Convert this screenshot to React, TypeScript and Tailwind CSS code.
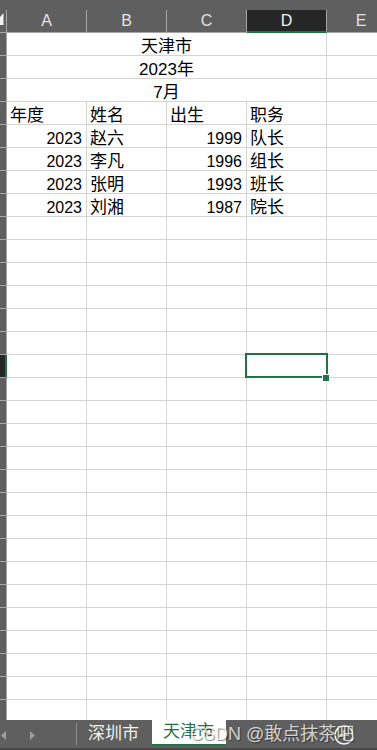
import React from 'react';

type Row = {
  year?: string;
  name?: string;
  born?: string;
  job?: string;
  merged?: string;
};

const rows: Row[] = [
  { merged: '天津市' },
  { merged: '2023年' },
  { merged: '7月' },
  { year: '年度', name: '姓名', born: '出生', job: '职务' },
  { year: '2023', name: '赵六', born: '1999', job: '队长' },
  { year: '2023', name: '李凡', born: '1996', job: '组长' },
  { year: '2023', name: '张明', born: '1993', job: '班长' },
  { year: '2023', name: '刘湘', born: '1987', job: '院长' }
];

const TOTAL_ROWS = 30;
const SELECTED_ROW = 14;

const isNum = (v?: string) => !!v && /^\d+$/.test(v);

const Cell = ({ value }: { value?: string }) => (
  <div
    className={`w-[80px] shrink-0 border-r border-[#d4d4d4] pt-[5px] leading-[18px] whitespace-nowrap overflow-hidden ${
      isNum(value) ? 'text-right pr-[4px] text-[16px]' : 'pl-[3px] text-[17px]'
    }`}
  >
    {value}
  </div>
);

const App = () => {
  const cols = ['A', 'B', 'C', 'D'];

  return (
    <div className="w-[377px] h-[750px] bg-[#5f5f5f] flex flex-col overflow-hidden font-['Liberation_Sans','Noto_Sans_CJK_SC',sans-serif] text-black">
      <div className="h-[10px] shrink-0" />

      {/* column headers */}
      <div className="h-[23px] shrink-0 flex">
        <div className="w-[7px] shrink-0 relative border-r border-b border-[#a6a6a6]">
          <svg width="4" height="14" viewBox="0 0 4 14" className="absolute left-0 top-[3px]">
            <polygon points="3.5,0 3.5,12 0,12 0,4" fill="#f2f2f2" />
          </svg>
        </div>
        {cols.map((c) => (
          <div
            key={c}
            className={`w-[80px] shrink-0 flex items-center justify-center text-[16px] ${
              c === 'D'
                ? 'bg-[#262626] border-b-2 border-[#217346] text-[#f2f2f2] border-r border-r-[#a6a6a6]'
                : 'border-r border-b border-[#a6a6a6] text-[#e3e3e3]'
            }`}
          >
            {c}
          </div>
        ))}
        <div className="flex-1 flex items-center justify-center pl-[18px] text-[16px] text-[#e3e3e3] border-b border-[#a6a6a6]">
          E
        </div>
      </div>

      {/* body */}
      <div className="h-[687px] shrink-0 flex overflow-hidden">
        <div className="w-[7px] shrink-0 flex flex-col">
          {Array.from({ length: TOTAL_ROWS }, (_, i) => (
            <div
              key={i}
              className={`h-[23px] shrink-0 border-b border-[#a6a6a6] ${
                i === SELECTED_ROW
                  ? 'bg-[#262626] border-r-2 border-r-[#217346]'
                  : 'border-r border-r-[#a6a6a6]'
              }`}
            />
          ))}
        </div>

        <div className="flex-1 bg-white relative overflow-hidden">
          {Array.from({ length: TOTAL_ROWS }, (_, i) => {
            const r = rows[i] || {};
            return (
              <div key={i} className="h-[23px] flex border-b border-[#d4d4d4]">
                {r.merged ? (
                  <div className="w-[320px] shrink-0 border-r border-[#d4d4d4] pt-[5px] leading-[18px] text-center text-[17px]">
                    {r.merged}
                  </div>
                ) : (
                  <>
                    <Cell value={r.year} />
                    <Cell value={r.name} />
                    <Cell value={r.born} />
                    <Cell value={r.job} />
                  </>
                )}
                <div className="flex-1" />
              </div>
            );
          })}

          {/* active cell D15 */}
          <div className="absolute left-[238px] top-[320px] w-[83px] h-[25px] border-2 border-[#217346]" />
          <div className="absolute left-[315px] top-[341px] w-[8px] h-[8px] bg-[#217346] border border-white" />
        </div>
      </div>

      {/* sheet tabs */}
      <div className="h-[30px] shrink-0 flex relative border-b-2 border-[#474747]">
        <div className="w-[76px] shrink-0 flex items-center">
          <svg width="6" height="9" viewBox="0 0 6 9" className="ml-[1px] mt-[2px]">
            <polygon points="5,0 5,9 0,4.5" fill="#9c9c9c" />
          </svg>
          <svg width="6" height="9" viewBox="0 0 6 9" className="ml-[23px] mt-[2px]">
            <polygon points="0,0 0,9 5,4.5" fill="#9c9c9c" />
          </svg>
        </div>
        <div className="w-px h-[22px] mt-[3px] bg-[#8c8c8c] shrink-0" />
        <div className="w-[75px] shrink-0 flex items-center pl-[11px] text-[17px] text-[#f2f2f2]">
          深圳市
        </div>
        <div className="w-[74px] h-[26px] shrink-0 bg-white border-b-2 border-[#217346] flex items-center pl-[11px] text-[17px] text-[#217346]">
          天津市
        </div>
        <div className="flex-1" />

        <svg width="22" height="22" viewBox="0 0 22 22" className="absolute left-[333px] top-[4px]">
          <circle cx="11" cy="11" r="9" fill="none" stroke="#f2f2f2" strokeWidth="1.5" />
          <line x1="11" y1="6" x2="11" y2="16" stroke="#f2f2f2" strokeWidth="1.5" />
          <line x1="6" y1="11" x2="16" y2="11" stroke="#f2f2f2" strokeWidth="1.5" />
        </svg>

        <div className="absolute left-[190px] top-[3px] text-[18px] leading-[22px] whitespace-nowrap text-white/75 [text-shadow:1px_1px_1px_rgba(0,0,0,0.45)]">
          CSDN @敢点抹茶吧
        </div>
      </div>
    </div>
  );
};

export default App;
